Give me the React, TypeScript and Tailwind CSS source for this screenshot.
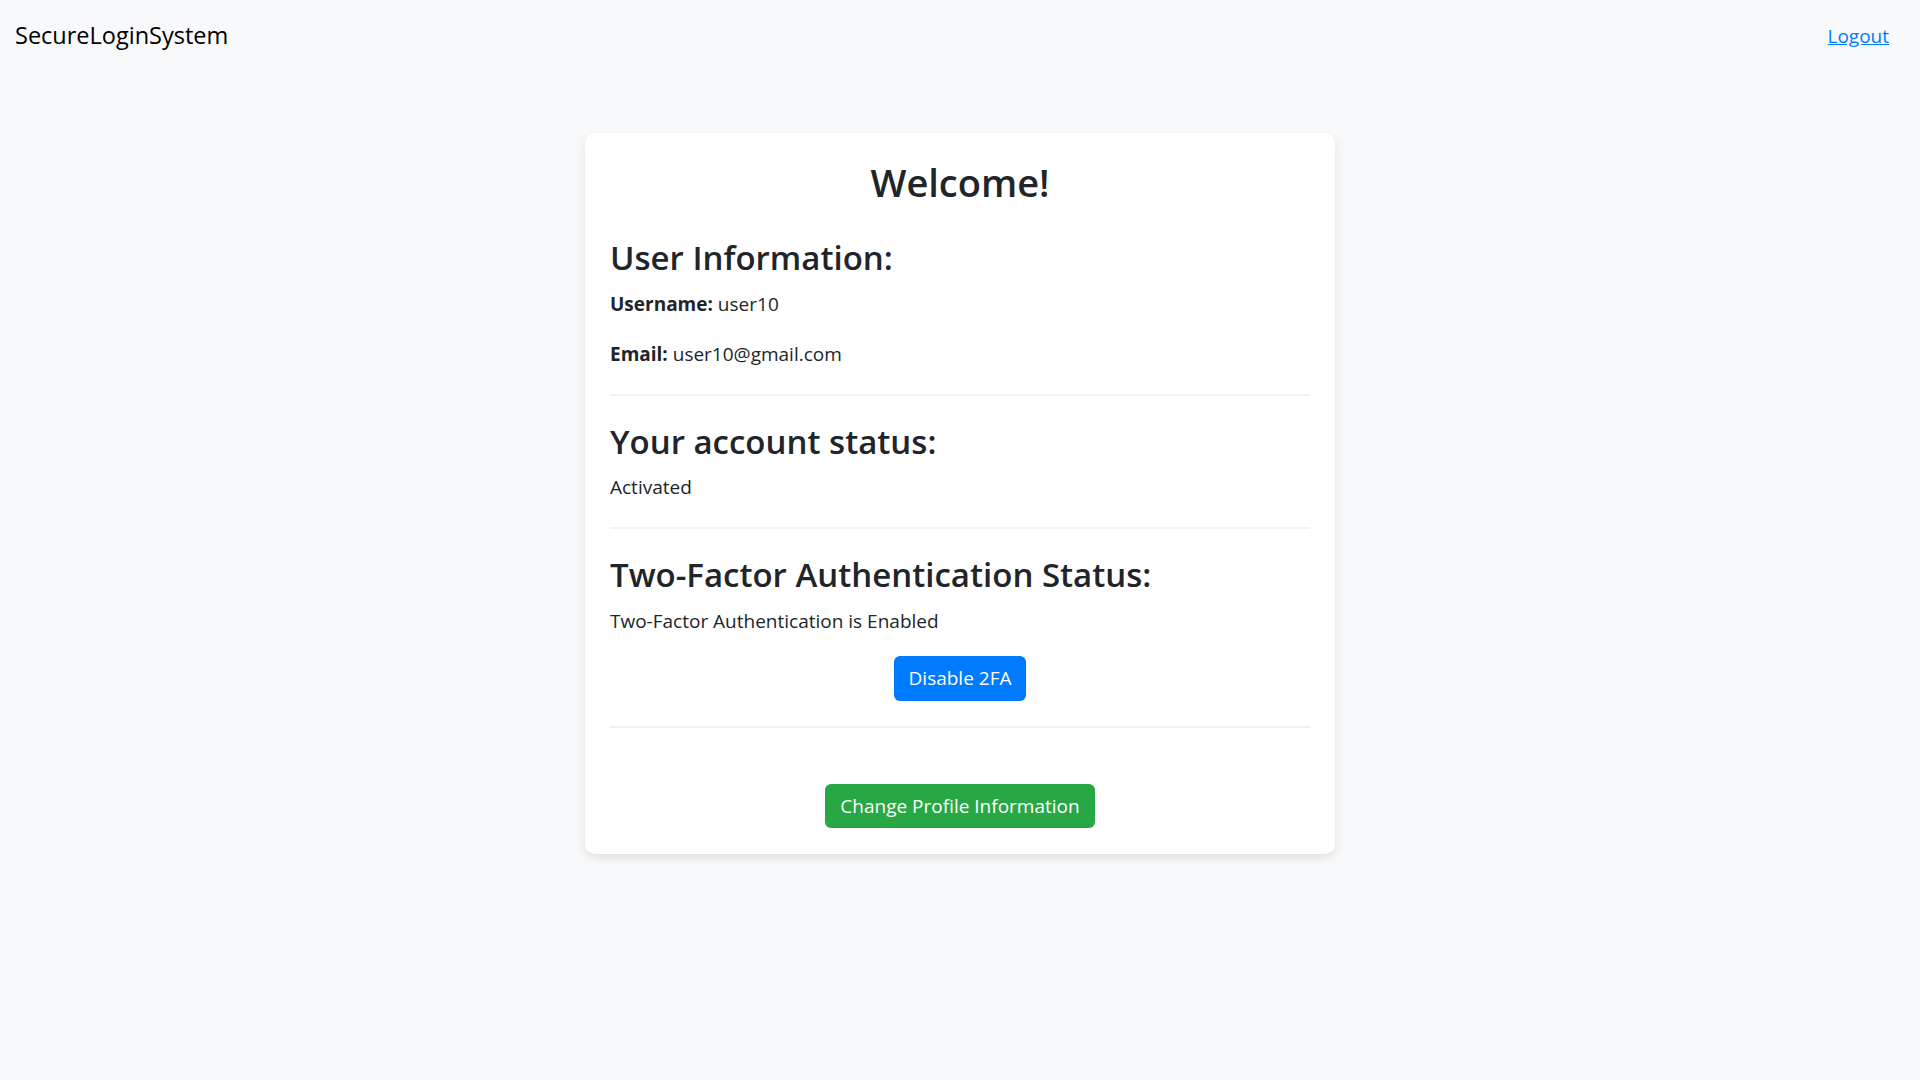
import React from 'react';

const Divider = () => <hr className="border-0 h-[2px] bg-[#f1f2f3] mt-[25px]" />;

const App = () => {
    return (
        <div className="min-h-screen bg-[#f8f9fa] text-[#212529] font-['Open_Sans',sans-serif]">
            <nav className="h-[72px] flex items-center justify-between pl-[15px] pr-[31px]">
                <span className="text-[23.5px] text-black">SecureLoginSystem</span>
                <a href="#" className="text-[19px] text-[#007bff] underline">Logout</a>
            </nav>

            <div className="w-[750px] mx-auto mt-[61px] bg-white rounded-[10px] shadow-[0_4px_10px_rgba(0,0,0,0.1)] px-[25px] pt-[25px] pb-[26px]">
                <h1 className="text-[38px] leading-[48px] font-semibold text-center">Welcome!</h1>

                <h2 className="text-[33px] leading-[42px] font-semibold mt-[31px]">User Information:</h2>
                <p className="text-[19px] leading-[30px] mt-[10px]">
                    <strong className="font-bold">Username:</strong> user10
                </p>
                <p className="text-[19px] leading-[30px] mt-[20px]">
                    <strong className="font-bold">Email:</strong> user10@gmail.com
                </p>
                <Divider />

                <h2 className="text-[33px] leading-[42px] font-semibold mt-[25px]">Your account status:</h2>
                <p className="text-[19px] leading-[30px] mt-[9px]">Activated</p>
                <Divider />

                <h2 className="text-[33px] leading-[42px] font-semibold mt-[25px]">Two-Factor Authentication Status:</h2>
                <p className="text-[19px] leading-[30px] mt-[10px]">Two-Factor Authentication is Enabled</p>
                <div className="flex justify-center mt-[20px]">
                    <button className="h-[45px] px-[15px] text-[19px] text-white bg-[#007bff] rounded-[6px]">
                        Disable 2FA
                    </button>
                </div>
                <Divider />

                <div className="flex justify-center mt-[56px]">
                    <button className="h-[44px] px-[15px] text-[19px] text-white bg-[#28a745] rounded-[6px]">
                        Change Profile Information
                    </button>
                </div>
            </div>
        </div>
    );
};

export default App;
